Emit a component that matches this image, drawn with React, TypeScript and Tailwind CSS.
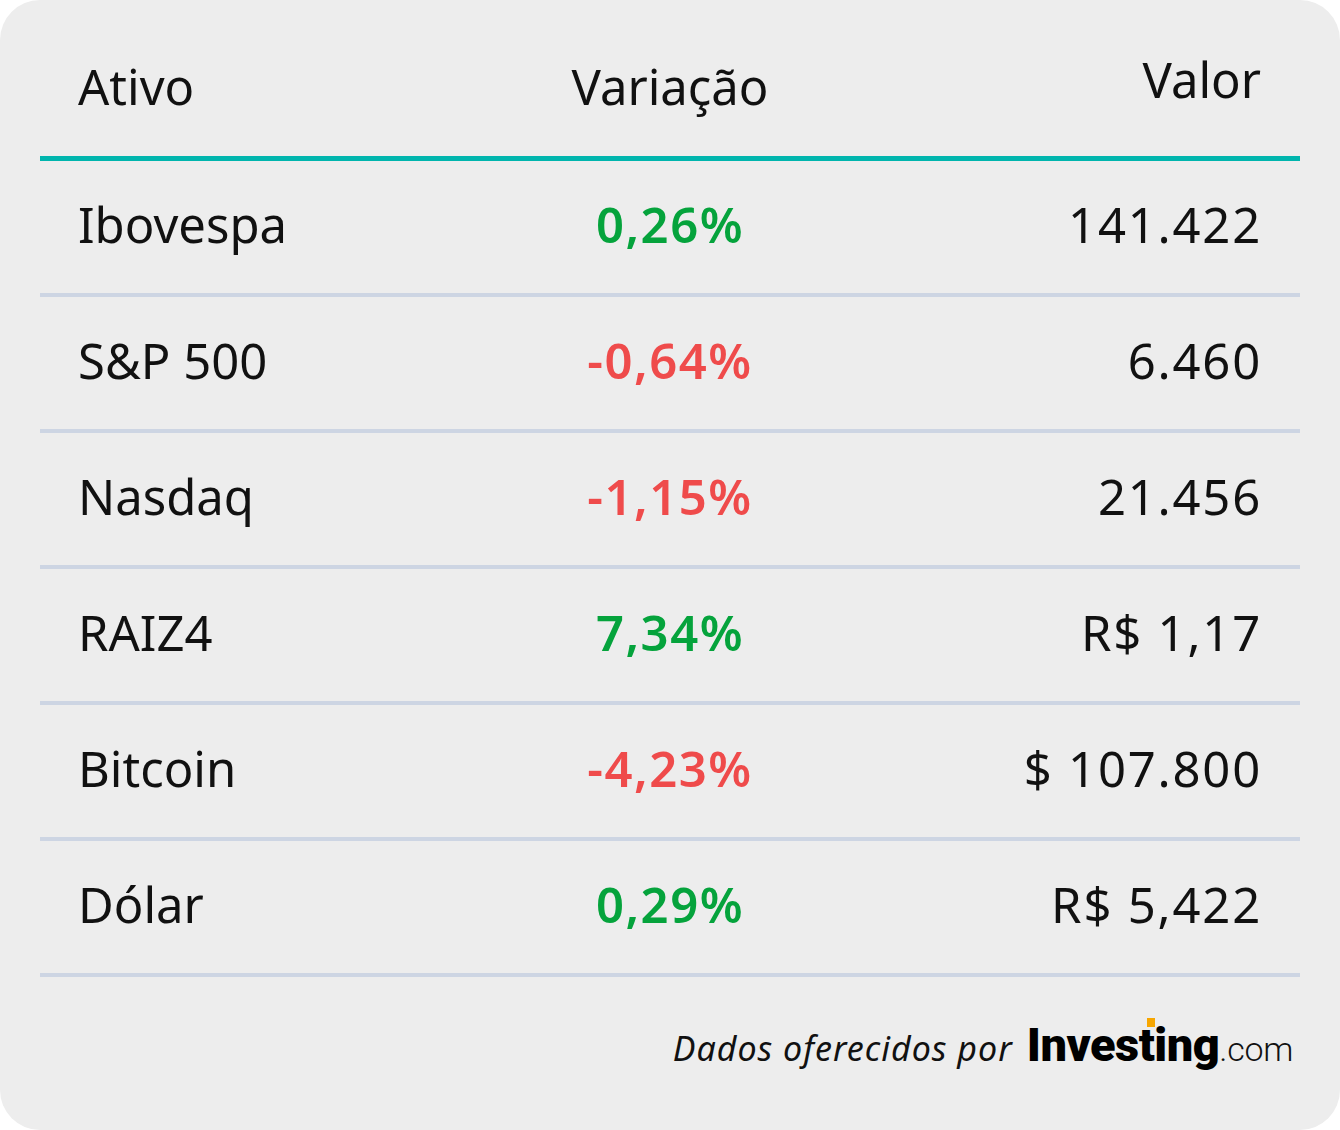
const rows = [
  { name: "Ibovespa", change: "0,26%", value: "141.422", up: true },
  { name: "S&P 500", change: "-0,64%", value: "6.460", up: false },
  { name: "Nasdaq", change: "-1,15%", value: "21.456", up: false },
  { name: "RAIZ4", change: "7,34%", value: "R$ 1,17", up: true },
  { name: "Bitcoin", change: "-4,23%", value: "$ 107.800", up: false },
  { name: "Dólar", change: "0,29%", value: "R$ 5,422", up: true },
];

const InvestingLogo = () => (
  <div className="flex items-baseline">
    <span className="relative font-['Roboto',sans-serif] font-black text-[47px] leading-none tracking-[-0.5px] text-black">
      Inves
      <span className="relative">
        t
        <span className="absolute left-[8px] top-[1px] w-[8px] h-[9px] bg-[#f7a600]" />
      </span>
      ing
    </span>
    <span className="font-['Roboto',sans-serif] font-light text-[34px] leading-none text-[#111] tracking-[-0.3px]">
      .com
    </span>
  </div>
);

export default function App() {
  return (
    <div className="w-[1340px] h-[1130px] bg-white font-['Noto_Sans',sans-serif]">
      <div className="w-full h-full rounded-[40px] bg-[#ededed] px-10 flex flex-col">
        <div className="grid grid-cols-3 h-[161px] border-b-[5px] border-[#00b5ad] items-end pb-[45px] text-[49px] leading-none text-[#111]">
          <div className="pl-[38px]">Ativo</div>
          <div className="text-center">Variação</div>
          <div className="text-right pr-[39px] mb-[7px]">Valor</div>
        </div>
        {rows.map((r) => (
          <div
            key={r.name}
            className="grid grid-cols-3 h-[136px] border-b-4 border-[#cdd5e3] items-center text-[49px] leading-none text-[#111] pb-[6px]"
          >
            <div className="pl-[38px]">{r.name}</div>
            <div
              className={
                r.up
                  ? "text-center font-semibold tracking-[1.5px] text-[#05a33c]"
                  : "text-center font-semibold tracking-[1.5px] text-[#ef4b4b]"
              }
            >
              {r.change}
            </div>
            <div className="text-right pr-[38px] tracking-[1.8px]">{r.value}</div>
          </div>
        ))}
        <div className="flex justify-end items-baseline gap-[14px] pr-[7px] pt-[44px]">
          <span className="italic text-[34px] leading-none text-[#111] tracking-[1px]">
            Dados oferecidos por
          </span>
          <InvestingLogo />
        </div>
      </div>
    </div>
  );
}
